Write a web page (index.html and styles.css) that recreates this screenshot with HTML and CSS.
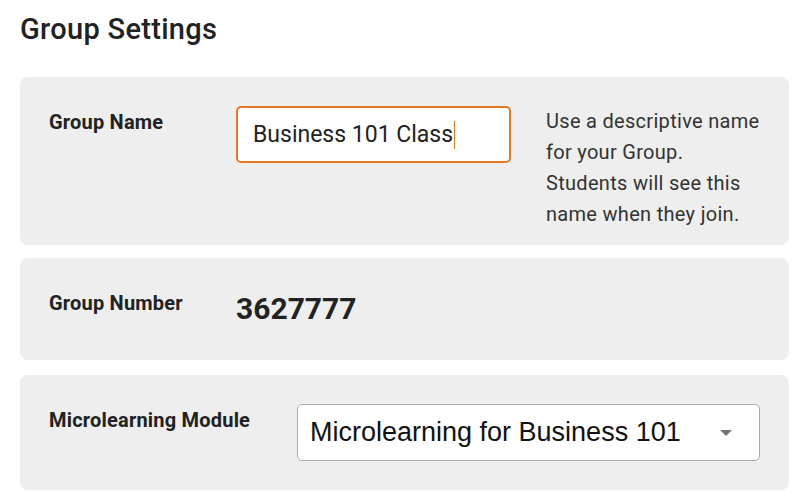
FILE: index.html
```html
<!DOCTYPE html>
<html>
<head>
<meta charset="utf-8">
<link rel="stylesheet" href="styles.css">
</head>
<body>
<main class="page">
  <h1 class="title">Group Settings</h1>
  <section class="card card-name">
    <div class="label">Group Name</div>
    <div class="text-input"><span class="value">Business 101 Class</span><span class="caret"></span></div>
    <p class="help">Use a descriptive name for your Group. Students will see this name when they join.</p>
  </section>
  <section class="card card-number">
    <div class="label">Group Number</div>
    <div class="number">3627777</div>
  </section>
  <section class="card card-module">
    <div class="label">Microlearning Module</div>
    <div class="select">
      <span class="select-value">Microlearning for Business 101</span>
      <span class="arrow"></span>
    </div>
  </section>
</main>
</body>
</html>
```
FILE: styles.css
```css
* { box-sizing: border-box; }
html, body { margin: 0; padding: 0; background: #ffffff; }
body { font-family: Roboto, "Noto Sans", sans-serif; color: #222; }
.page { width: 769px; margin-left: 20px; }
.title {
  margin: 12px 0 31px;
  font-size: 29px;
  line-height: 34px;
  font-weight: 500;
  letter-spacing: 0.3px;
  color: #222;
}
.card {
  display: flex;
  align-items: flex-start;
  background: #eeeeee;
  border-radius: 8px;
  padding: 29px 29px 29px 29px;
}
.card-name { padding-bottom: 15px; }
.card-number { margin-top: 13px; }
.card-module { margin-top: 15px; }
.label {
  width: 187px;
  flex: none;
  padding-top: 4px;
  font-size: 20px;
  line-height: 24px;
  font-weight: 700;
  letter-spacing: 0.2px;
  color: #222;
}
.card-module .label { width: 248px; }
.text-input {
  width: 275px;
  height: 57px;
  flex: none;
  border: 2px solid #e87722;
  border-radius: 5px;
  background: #fff;
  padding-left: 15px;
  display: flex;
  align-items: center;
  font-size: 23px;
  color: #222;
}
.caret {
  display: inline-block;
  width: 1px;
  height: 28px;
  background: #e87722;
  margin-left: 1px;
}
.help {
  margin: 0 0 0 35px;
  flex: 1;
  font-size: 20px;
  line-height: 31px;
  letter-spacing: 0.3px;
  color: #333;
}
.number {
  font-size: 30px;
  line-height: 44px;
  font-weight: 700;
  color: #222;
}
.select {
  flex: 1;
  height: 57px;
  border: 1px solid #aaaaaa;
  border-radius: 5px;
  background: #fff;
  padding: 0 27px 0 12px;
  display: flex;
  align-items: center;
  justify-content: space-between;
  font-family: "Liberation Sans", Arial, sans-serif;
  font-size: 27px;
  color: #111;
}
.arrow {
  width: 0;
  height: 0;
  border-left: 6.5px solid transparent;
  border-right: 6.5px solid transparent;
  border-top: 6px solid #757575;
}
```
